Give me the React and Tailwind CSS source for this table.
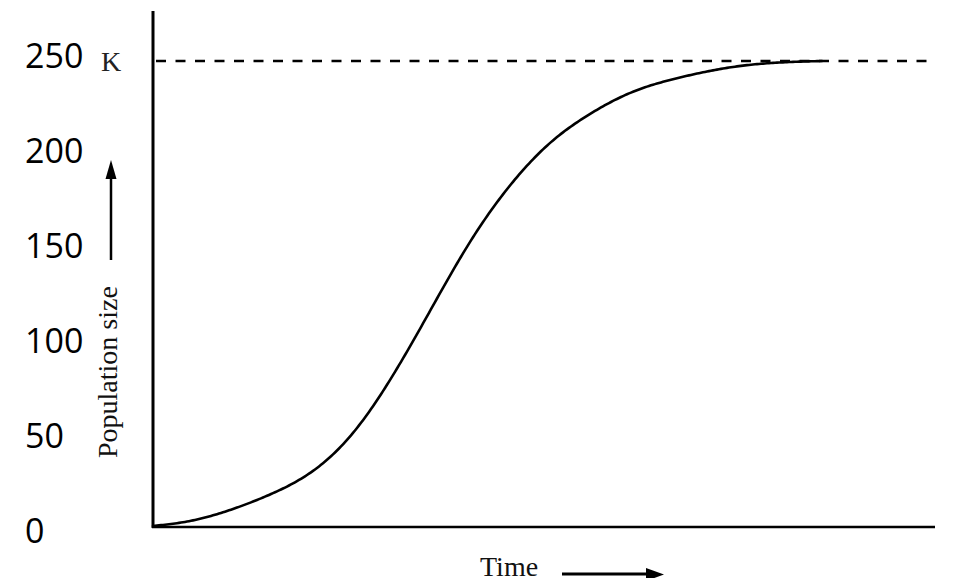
import React from 'react';

// sampled from the reference, page coordinates
const curvePoints = [
  [153, 526], [190, 521], [230, 510], [270, 494.5], [310, 473], [350, 436.5],
  [390, 380], [430, 311], [470, 242], [510, 185.5], [550, 143], [590, 114],
  [630, 93], [680, 77.5], [740, 66], [822, 61],
];

// natural cubic spline y(x), sampled into a polyline
const toPath = (pts) => {
  const n = pts.length;
  const xs = pts.map((p) => p[0]);
  const ys = pts.map((p) => p[1]);
  const h = xs.slice(1).map((x, i) => x - xs[i]);
  const a = new Array(n).fill(0);
  const b = new Array(n).fill(1);
  const c = new Array(n).fill(0);
  const r = new Array(n).fill(0);
  for (let i = 1; i < n - 1; i++) {
    a[i] = h[i - 1];
    b[i] = 2 * (h[i - 1] + h[i]);
    c[i] = h[i];
    r[i] = 6 * ((ys[i + 1] - ys[i]) / h[i] - (ys[i] - ys[i - 1]) / h[i - 1]);
  }
  for (let i = 1; i < n; i++) {
    const w = a[i] / b[i - 1];
    b[i] -= w * c[i - 1];
    r[i] -= w * r[i - 1];
  }
  const M = new Array(n).fill(0);
  M[n - 1] = r[n - 1] / b[n - 1];
  for (let i = n - 2; i >= 0; i--) M[i] = (r[i] - c[i] * M[i + 1]) / b[i];

  let path = '';
  let seg = 0;
  for (let x = xs[0]; x <= xs[n - 1]; x += 2) {
    while (seg < n - 2 && x > xs[seg + 1]) seg++;
    const hi = h[seg];
    const A = (xs[seg + 1] - x) / hi;
    const B = (x - xs[seg]) / hi;
    const y = A * ys[seg] + B * ys[seg + 1] + ((A ** 3 - A) * M[seg] + (B ** 3 - B) * M[seg + 1]) * hi * hi / 6;
    path += `${path ? 'L' : 'M'}${x},${y.toFixed(2)} `;
  }
  path += `L${xs[n - 1]},${ys[n - 1]}`;
  return path;
};

const ticks = ['250', '200', '150', '100', '50', '0'];

const App = () => {
  return (
    <div className="flex w-[954px] h-[578px] bg-white overflow-hidden">
      <div className="flex flex-col w-[96px] pl-[25px] pt-[8px] shrink-0 font-['Open_Sans',sans-serif] text-[34px] text-black">
        {ticks.map((t) => (
          <div key={t} className="h-[95px] leading-[95px]">{t}</div>
        ))}
      </div>

      <svg
        className="shrink-0"
        width="858"
        height="578"
        viewBox="96 0 858 578"
        fill="none"
      >
        {/* axes */}
        <line x1="153" y1="11" x2="153" y2="528" stroke="#000" strokeWidth="3" />
        <line x1="152" y1="527" x2="935" y2="527" stroke="#000" strokeWidth="2.5" />

        {/* carrying capacity */}
        <line x1="156" y1="61" x2="935" y2="61" stroke="#000" strokeWidth="2.5" strokeDasharray="10 9.5" />
        <text x="101" y="71" fontFamily="'Liberation Serif', serif" fontSize="28" fill="#222">K</text>

        {/* logistic curve */}
        <path d={toPath(curvePoints)} stroke="#000" strokeWidth="2.6" strokeLinecap="round" strokeLinejoin="round" />

        {/* y label + arrow */}
        <line x1="111" y1="176" x2="111" y2="260" stroke="#000" strokeWidth="2.5" />
        <polygon points="111,160 105.5,179 116.5,179" fill="#000" />
        <text
          transform="translate(117 458) rotate(-90)"
          fontFamily="'Liberation Serif', serif"
          fontSize="28"
          fill="#111"
        >
          Population size
        </text>

        {/* x label + arrow */}
        <text x="480" y="576" fontFamily="'Liberation Serif', serif" fontSize="28" fill="#111">Time</text>
        <line x1="562" y1="574" x2="650" y2="574" stroke="#000" strokeWidth="3" />
        <polygon points="664,574.5 646,568 646,581" fill="#000" />
      </svg>
    </div>
  );
};

export default App;
